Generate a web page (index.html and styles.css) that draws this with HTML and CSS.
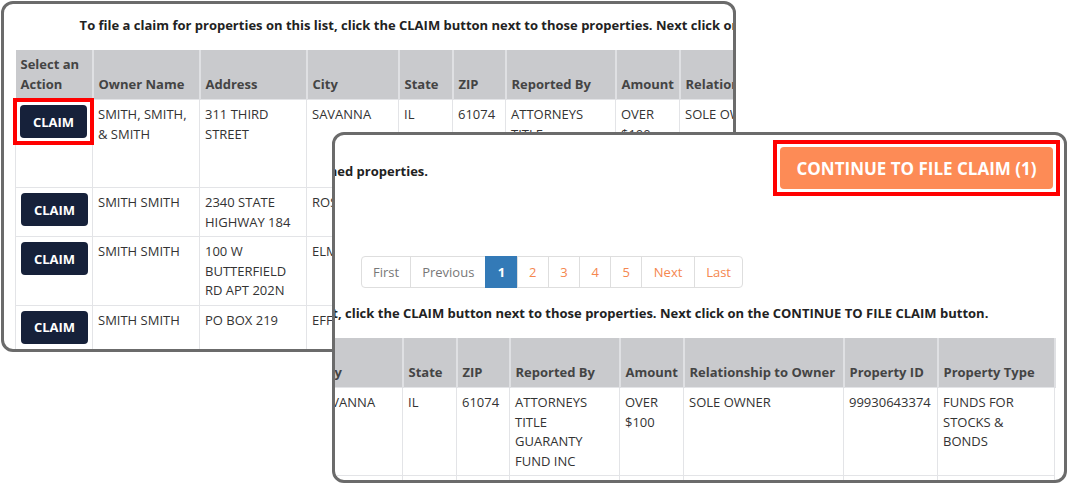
FILE: index.html
```html
<!DOCTYPE html>
<html lang="en">
<head>
    <meta charset="UTF-8">
    <meta name="viewport" content="width=device-width, initial-scale=1.0">
    <title>Unclaimed Property Search Results</title>
<link rel="stylesheet" href="styles.css">
</head>
<body>
    <div class="desk">

        <!-- back screenshot: top of the results table -->
        <div class="window window-back">
            <div class="page">
                <p class="intro">To file a claim for properties on this list, click the CLAIM button next to those properties. Next click on the CONTINUE TO FILE CLAIM button.</p>
                <table class="results">
                    <colgroup>
                        <col class="c-action"><col class="c-owner"><col class="c-address"><col class="c-city">
                        <col class="c-state"><col class="c-zip"><col class="c-reported"><col class="c-amount">
                        <col class="c-relation"><col class="c-id"><col class="c-type">
                    </colgroup>
                    <thead>
                        <tr>
                            <th>Select an Action</th>
                            <th>Owner Name</th>
                            <th>Address</th>
                            <th>City</th>
                            <th>State</th>
                            <th>ZIP</th>
                            <th>Reported By</th>
                            <th>Amount</th>
                            <th>Relationship to Owner</th>
                            <th>Property ID</th>
                            <th>Property Type</th>
                        </tr>
                    </thead>
                    <tbody>
                        <tr>
                            <td><span class="mark mark-claim"><button class="claim-btn">CLAIM</button></span></td>
                            <td>SMITH, SMITH, &amp; SMITH</td>
                            <td>311 THIRD STREET</td>
                            <td>SAVANNA</td>
                            <td>IL</td>
                            <td>61074</td>
                            <td>ATTORNEYS TITLE GUARANTY FUND INC</td>
                            <td>OVER $100</td>
                            <td>SOLE OWNER</td>
                            <td>99930643374</td>
                            <td>FUNDS FOR STOCKS &amp; BONDS</td>
                        </tr>
                        <tr>
                            <td><button class="claim-btn">CLAIM</button></td>
                            <td>SMITH SMITH</td>
                            <td>2340 STATE HIGHWAY 184</td>
                            <td>ROSCOE</td>
                            <td>IL</td>
                            <td>61073</td>
                            <td>US BANK</td>
                            <td>UNDER $100</td>
                            <td>SOLE OWNER</td>
                            <td>99930651120</td>
                            <td>WAGES</td>
                        </tr>
                        <tr>
                            <td><button class="claim-btn">CLAIM</button></td>
                            <td>SMITH SMITH</td>
                            <td>100 W BUTTERFIELD RD APT 202N</td>
                            <td>ELMHURST</td>
                            <td>IL</td>
                            <td>60126</td>
                            <td>COMED</td>
                            <td>UNDER $100</td>
                            <td>SOLE OWNER</td>
                            <td>99930672281</td>
                            <td>UTILITY DEPOSITS</td>
                        </tr>
                        <tr>
                            <td><button class="claim-btn">CLAIM</button></td>
                            <td>SMITH SMITH</td>
                            <td>PO BOX 219</td>
                            <td>EFFINGHAM</td>
                            <td>IL</td>
                            <td>62401</td>
                            <td>STATE FARM</td>
                            <td>UNDER $100</td>
                            <td>SOLE OWNER</td>
                            <td>99930688412</td>
                            <td>REFUNDS</td>
                        </tr>
                    </tbody>
                </table>
            </div>
        </div>

        <!-- front screenshot: same page scrolled right -->
        <div class="window window-front">
            <div class="page">
                <div class="toolbar">
                    <p class="claimed-note">Below is the list of your claimed properties.</p>
                    <div class="mark mark-continue">
                        <button class="continue-btn">CONTINUE TO FILE CLAIM (1)</button>
                    </div>
                </div>
                <nav class="pager">
                    <span class="page-link disabled">First</span>
                    <span class="page-link disabled">Previous</span>
                    <span class="page-link active">1</span>
                    <span class="page-link">2</span>
                    <span class="page-link">3</span>
                    <span class="page-link">4</span>
                    <span class="page-link">5</span>
                    <span class="page-link">Next</span>
                    <span class="page-link">Last</span>
                </nav>
                <p class="intro">To file a claim for properties on this list, click the CLAIM button next to those properties. Next click on the CONTINUE TO FILE CLAIM button.</p>
                <table class="results">
                    <colgroup>
                        <col class="c-action"><col class="c-owner"><col class="c-address"><col class="c-city">
                        <col class="c-state"><col class="c-zip"><col class="c-reported"><col class="c-amount">
                        <col class="c-relation"><col class="c-id"><col class="c-type">
                    </colgroup>
                    <thead>
                        <tr>
                            <th>Select an Action</th>
                            <th>Owner Name</th>
                            <th>Address</th>
                            <th>City</th>
                            <th>State</th>
                            <th>ZIP</th>
                            <th>Reported By</th>
                            <th>Amount</th>
                            <th>Relationship to Owner</th>
                            <th>Property ID</th>
                            <th>Property Type</th>
                        </tr>
                    </thead>
                    <tbody>
                        <tr>
                            <td><button class="claim-btn">CLAIM</button></td>
                            <td>SMITH, SMITH, &amp; SMITH</td>
                            <td>311 THIRD STREET</td>
                            <td>SAVANNA</td>
                            <td>IL</td>
                            <td>61074</td>
                            <td>ATTORNEYS TITLE GUARANTY FUND INC</td>
                            <td>OVER $100</td>
                            <td>SOLE OWNER</td>
                            <td>99930643374</td>
                            <td>FUNDS FOR STOCKS &amp; BONDS</td>
                        </tr>
                        <tr>
                            <td><button class="claim-btn">CLAIM</button></td>
                            <td>SMITH SMITH</td>
                            <td>2340 STATE HIGHWAY 184</td>
                            <td>ROSCOE</td>
                            <td>IL</td>
                            <td>61073</td>
                            <td>US BANK</td>
                            <td>UNDER $100</td>
                            <td>SOLE OWNER</td>
                            <td>99930651120</td>
                            <td>WAGES</td>
                        </tr>
                    </tbody>
                </table>
            </div>
        </div>

    </div>
</body>
</html>
```

FILE: styles.css
```css
body{
    margin: 0;
    background-color: #fff;
    font-family: "Open Sans", "Liberation Sans", sans-serif;
    color: #333;
}
.desk{
    position: relative;
    width: 1068px;
    height: 484px;
    overflow: hidden;
}

/* screenshot frames */
.window{
    position: absolute;
    box-sizing: border-box;
    width: 735px;
    height: 351px;
    border: 3px solid #6b6b6b;
    border-radius: 12px;
    background-color: #fff;
    overflow: hidden;
}
.window-back{
    left: 1px;
    top: 1px;
}
.window-front{
    left: 332px;
    top: 132px;
}
.page{
    width: 1056px;
}
.window-front .page{
    margin-left: -327px;
}

/* red highlight box around a button */
.mark{
    display: block;
    width: fit-content;
    margin: -7px;
    padding: 3px;
    border: 4px solid #f00;
}
.mark-claim{
    position: relative;
    z-index: 1;
    margin-left: -8px;
}

/* top bar with continue button */
.toolbar{
    display: flex;
    align-items: center;
    padding: 12px 11px 0;
}
.claimed-note{
    width: 409px;
    margin: 0;
    padding-top: 5px;
    text-align: right;
    white-space: nowrap;
    font-size: 13px;
    font-weight: 700;
    line-height: 20px;
    color: #222;
}
.mark-continue{
    margin-left: auto;
}
.continue-btn{
    display: block;
    width: 273px;
    height: 42px;
    padding: 0;
    border: none;
    border-radius: 4px;
    background-color: #fd8b56;
    color: #fff;
    font-family: inherit;
    font-size: 17px;
    font-weight: 700;
}

/* pagination */
.pager{
    display: flex;
    margin: 67px 0 0 353px;
}
.page-link{
    box-sizing: border-box;
    height: 32px;
    padding: 0 11.4px;
    margin-left: -1px;
    border: 1px solid #dedede;
    line-height: 30px;
    font-size: 13px;
    color: #f5874f;
}
.page-link:first-child{
    margin-left: 0;
    border-radius: 4px 0 0 4px;
}
.page-link:last-child{
    border-radius: 0 4px 4px 0;
}
.page-link.disabled{
    padding: 0 11px;
    color: #777;
}
.page-link.active{
    background-color: #337ab7;
    border-color: #337ab7;
    color: #fff;
    font-weight: 700;
}

/* instructions line */
.intro{
    margin: 11px 0 15px;
    text-align: center;
    white-space: nowrap;
    font-size: 13px;
    font-weight: 700;
    line-height: 20px;
    color: #222;
}
.window-front .intro{
    margin-top: 15px;
}

/* results table */
.results{
    margin-left: 11px;
    width: 1035px;
    border-collapse: collapse;
    table-layout: fixed;
    font-size: 13px;
    line-height: 19.5px;
}
.c-action{ width: 77px; }
.c-owner{ width: 107px; }
.c-address{ width: 107px; }
.c-city{ width: 92px; }
.c-state{ width: 54px; }
.c-zip{ width: 53px; }
.c-reported{ width: 110px; }
.c-amount{ width: 64px; }
.c-relation{ width: 160px; }
.c-id{ width: 94px; }
.c-type{ width: 117px; }

.results th,
.results td{
    padding: 5px 5px 4px;
    border: 1px solid #e3e4e7;
    text-align: left;
}
.results th{
    padding-bottom: 5px;
    vertical-align: bottom;
    background-color: #c9cacd;
    border-color: #dfe0e3;
    border-width: 0 2px 0 0;
    font-weight: 700;
    color: #444;
}
.results td{
    vertical-align: top;
}
.claim-btn{
    display: block;
    width: 67px;
    height: 33px;
    padding: 0;
    border: none;
    border-radius: 4px;
    background-color: #16213a;
    color: #fff;
    font-family: inherit;
    font-size: 13px;
    font-weight: 700;
}
```
